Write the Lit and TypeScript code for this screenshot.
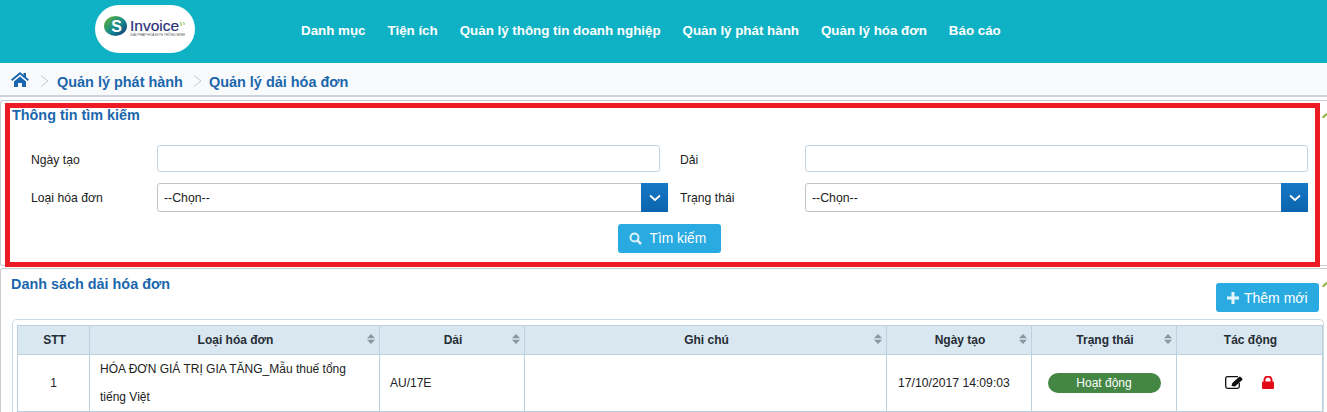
import { LitElement, html, css } from "lit";
import { customElement } from "lit/decorators.js";

const sortIcon = html`<svg class="sort" width="8" height="10" viewBox="0 0 8 10"><path d="M4 0 8 4.300H0z" fill="#8a96a0"/><path d="M4 10 0 5.700h8z" fill="#8a96a0"/></svg>`;
const chevron = html`<svg width="12" height="8" viewBox="0 0 12 8"><path d="M1 1.500 6 6l5-4.500" fill="none" stroke="#fff" stroke-width="1.800"/></svg>`;
const tick = html`<svg class="tick" width="5" height="5" viewBox="0 0 5 5"><path d="M0 5 1 3 3 1 5 0 5 2 2 5z" fill="#8cb63c"/></svg>`;

@customElement("app-root")
export class AppRoot extends LitElement {
  static styles = css`
    :host { display: block; width: 1327px; height: 412px; overflow: hidden; background: #fff; font-family: "Liberation Sans", Arial, sans-serif; font-size: 12px; color: #222; }
    * { box-sizing: border-box; }
    .top { height: 63px; background: #0fb2c4; display: flex; align-items: flex-start; padding-left: 95px; }
    .logo { width: 100px; height: 48px; margin-top: 5px; background: #fff; border-radius: 24px; display: flex; align-items: flex-start; padding: 11px 0 0 9px; flex: none; }
    .mark { flex: none; display: block; }
    .brand { display: flex; flex-direction: column; margin: 3px 0 0 3px; width: 50px; }
    .brand b { font: 400 15.500px/14px "Liberation Sans", sans-serif; color: #2b2f7a; -webkit-text-stroke: .2px #2b2f7a; }
    .brand i { font: 400 3.300px/4px "Liberation Sans", sans-serif; color: #555; white-space: nowrap; }
    .wave { margin: 6px 0 0 0; flex: none; }
    nav { display: flex; gap: 22px; margin-left: 106px; padding-top: 23px; }
    nav span { color: #fff; font-weight: 700; font-size: 13.350px; line-height: 15px; white-space: nowrap; }
    .crumb { height: 34px; background: #f9fafc; border-bottom: 2px solid #ccd2d8; display: flex; align-items: flex-start; padding: 9px 0 0 11px; color: #1a67ad; font-size: 14.450px; font-weight: 700; }
    .crumb svg.home { margin-right: 9px; }
    .crumb .txt { padding-top: 2px; line-height: 16px; }
    .crumb .sep { margin: 2px 6px 0 0; flex: none; }
    .crumb .sep.second { margin-right: 5px; }
    .crumb .t1 { margin-right: 8px; }
    .panel { margin-top: 3px; height: 166px; border: 1px solid #c9ced3; border-right: 0; border-radius: 3px 0 0 3px; padding: 2px 0 0 4px; position: relative; }
    .red { width: 1315px; height: 164px; border: 5px solid #ed1c24; background: #fff; position: relative; }
    h3 { margin: 0; font-size: 14.400px; line-height: 15px; color: #1a67ad; font-weight: 700; }
    .red h3 { padding-left: 2px; }
    .tick { position: absolute; right: 0; }
    .panel .tick { top: 12px; }
    .list .tick { top: 13px; }
    .form { display: grid; grid-template-columns: 126px 503px 20px 125px 503px; row-gap: 11px; margin: 22px 0 0 21px; align-items: center; }
    .form label { font-size: 12.200px; line-height: 16px; color: #222; }
    .form label.r1 { padding-top: 2px; }
    .input { height: 27px; border: 1px solid #c3d5e2; border-radius: 3px; background: #fff; }
    .select { height: 29px; border: 1px solid #bfc3c6; border-radius: 3px 0 0 3px; background: #fff; display: flex; align-items: center; justify-content: space-between; padding-left: 6px; color: #222; font-size: 12.300px; }
    .select.wide { margin-right: -8px; position: relative; }
    .select span:first-child { padding-top: 1px; }
    .arrow { width: 27px; height: 29px; margin: -1px -1px -1px 0; background: linear-gradient(#1878c6, #0b64ad); display: flex; align-items: center; justify-content: center; }
    .actions { display: flex; justify-content: center; margin-top: 12px; padding-left: 13px; }
    .btn { background: #29aae1; color: #fff; border-radius: 3px; display: inline-flex; align-items: center; }
    .search { width: 103px; height: 29px; padding-left: 11px; gap: 8px; font-size: 13.800px; }
    .list { margin-top: 2px; height: 200px; border: 1px solid #c9ced3; border-right: 0; border-radius: 3px 0 0 0; padding: 8px 0 0 10px; position: relative; }
    .head { display: flex; justify-content: space-between; align-items: flex-start; padding-right: 8px; height: 42px; }
    .add { width: 103px; height: 29px; margin-top: 6px; padding-left: 11px; gap: 5px; font-size: 14px; }
    .tablewrap { width: 1312px; margin-left: 1px; border: 1px solid #ccdae3; border-bottom: 0; border-radius: 5px 5px 0 0; padding: 5px 0 0 4px; }
    table { border-collapse: collapse; table-layout: fixed; width: 1305px; }
    th, td { border: 1px solid #bdd0dd; font-size: 12px; }
    th { height: 29px; background: #d9e7f0; font-weight: 700; color: #252d35; position: relative; padding: 0 0 0 2px; }
    th .sort { position: absolute; right: 4px; top: 8px; }
    td { height: 57px; text-align: center; padding: 0; color: #222; }
    td.left { text-align: left; padding: 0 30px 0 10px; line-height: 28px; }
    td.code { padding: 0 10px; text-align: left; }
    td.date { padding-left: 11px; text-align: left; font-size: 12.200px; }
    .pill { display: inline-block; width: 113px; height: 20px; line-height: 20px; border-radius: 10px; background: #448644; color: #fff; font-size: 12px; }
    .icons { display: flex; justify-content: center; gap: 19px; align-items: center; padding-bottom: 2px; }
  `;

  render() {
    const nav = ["Danh mục", "Tiện ích", "Quản lý thông tin doanh nghiệp", "Quản lý phát hành", "Quản lý hóa đơn", "Báo cáo"];
    return html`
      <div class="top">
        <div class="logo">
          <svg class="mark" width="23" height="20" viewBox="0 0 23 20">
            <defs><linearGradient id="g" x1="0" y1="0" x2="1" y2="1"><stop offset="0" stop-color="#6bb52e"/><stop offset=".55" stop-color="#118a8c"/><stop offset="1" stop-color="#17307e"/></linearGradient></defs>
            <ellipse cx="11.500" cy="10" rx="11.500" ry="10" fill="url(#g)"/>
            <text x="12.500" y="15.500" text-anchor="middle" font-family="Liberation Sans" font-size="16" font-weight="700" fill="#fff">S</text>
          </svg>
          <div class="brand"><b>Invoice</b><i>GIẢI PHÁP HÓA ĐƠN THÔNG MINH</i></div>
          <svg class="wave" width="5" height="5" viewBox="0 0 5 5"><path d="M.5 0q1.500 2 .5 4M3.500 0q1 1.500 .5 3" fill="none" stroke="#6fb52c" stroke-width=".9"/></svg>
        </div>
        <nav>${nav.map((n) => html`<span>${n}</span>`)}</nav>
      </div>
      <div class="crumb">
        <svg class="home" width="18" height="15" viewBox="0 0 18 15"><path d="M9 0 0 7.500 1.200 9 9 2.500 16.800 9 18 7.500 15 5V1h-2.500v2z" fill="#1a67ad"/><path d="M3 9.500 9 4.500l6 5V15h-4v-4H7v4H3z" fill="#1a67ad"/></svg>
        <svg class="sep" width="13" height="14" viewBox="0 0 13 14"><path d="M3 1.500l7 5.500-7 5.500" fill="none" stroke="#c3c9cf"/></svg>
        <span class="txt t1">Quản lý phát hành</span>
        <svg class="sep second" width="13" height="14" viewBox="0 0 13 14"><path d="M3 1.500l7 5.500-7 5.500" fill="none" stroke="#c3c9cf"/></svg>
        <span class="txt">Quản lý dải hóa đơn</span>
      </div>
      <div class="panel">
        ${tick}
        <div class="red">
          <h3>Thông tin tìm kiếm</h3>
          <div class="form">
            <label class="r1">Ngày tạo</label><div class="input"></div><span></span><label class="r1">Dải</label><div class="input"></div>
            <label>Loại hóa đơn</label><div class="select wide"><span>--Chọn--</span><span class="arrow">${chevron}</span></div><span></span><label>Trạng thái</label><div class="select"><span>--Chọn--</span><span class="arrow">${chevron}</span></div>
          </div>
          <div class="actions">
            <div class="btn search">
              <svg width="13" height="13" viewBox="0 0 13 13"><circle cx="5.500" cy="5.500" r="4" fill="none" stroke="#dff1fa" stroke-width="2"/><path d="M8.500 8.500 12 12" stroke="#dff1fa" stroke-width="2.500"/></svg>
              <span>Tìm kiếm</span>
            </div>
          </div>
        </div>
      </div>
      <div class="list">
        ${tick}
        <div class="head">
          <h3>Danh sách dải hóa đơn</h3>
          <div class="btn add">
            <svg width="12" height="12" viewBox="0 0 12 12"><path d="M4.500 0h3v4.500H12v3H7.500V12h-3V7.500H0v-3h4.500z" fill="#e6f5fc"/></svg>
            <span>Thêm mới</span>
          </div>
        </div>
        <div class="tablewrap">
          <table>
            <colgroup><col style="width:72px"/><col style="width:290px"/><col style="width:145px"/><col style="width:362px"/><col style="width:145px"/><col style="width:145px"/><col style="width:146px"/></colgroup>
            <thead><tr>
              <th>STT</th><th>Loại hóa đơn${sortIcon}</th><th>Dải${sortIcon}</th><th>Ghi chú${sortIcon}</th><th>Ngày tạo${sortIcon}</th><th>Trạng thái${sortIcon}</th><th>Tác động</th>
            </tr></thead>
            <tbody><tr>
              <td>1</td>
              <td class="left">HÓA ĐƠN GIÁ TRỊ GIA TĂNG_Mẫu thuế tổng tiếng Việt</td>
              <td class="code">AU/17E</td>
              <td></td>
              <td class="date">17/10/2017 14:09:03</td>
              <td><span class="pill">Hoạt động</span></td>
              <td><div class="icons">
                <svg width="18" height="13" viewBox="0 0 18 13"><path d="M13 .7H2.500Q.7 .7 .7 2.500V10.500Q.7 12.300 2.500 12.300H12.500Q14.300 12.300 14.300 10.500V7" fill="none" stroke="#111" stroke-width="1.300"/><path d="M6.500 10 7.300 7 14 .9Q14.800 .2 15.600 .9L17.200 2.400Q17.800 3.200 17.200 3.900L10 10.400z" fill="#111"/></svg>
                <svg width="12" height="13" viewBox="0 0 12 13"><path d="M2.500 6V4a3.500 3.500 0 0 1 7 0v2" fill="none" stroke="#e30b17" stroke-width="2"/><rect x="0" y="5.500" width="12" height="7.500" rx="1" fill="#e30b17"/></svg>
              </div></td>
            </tr></tbody>
          </table>
        </div>
      </div>
    `;
  }
}
